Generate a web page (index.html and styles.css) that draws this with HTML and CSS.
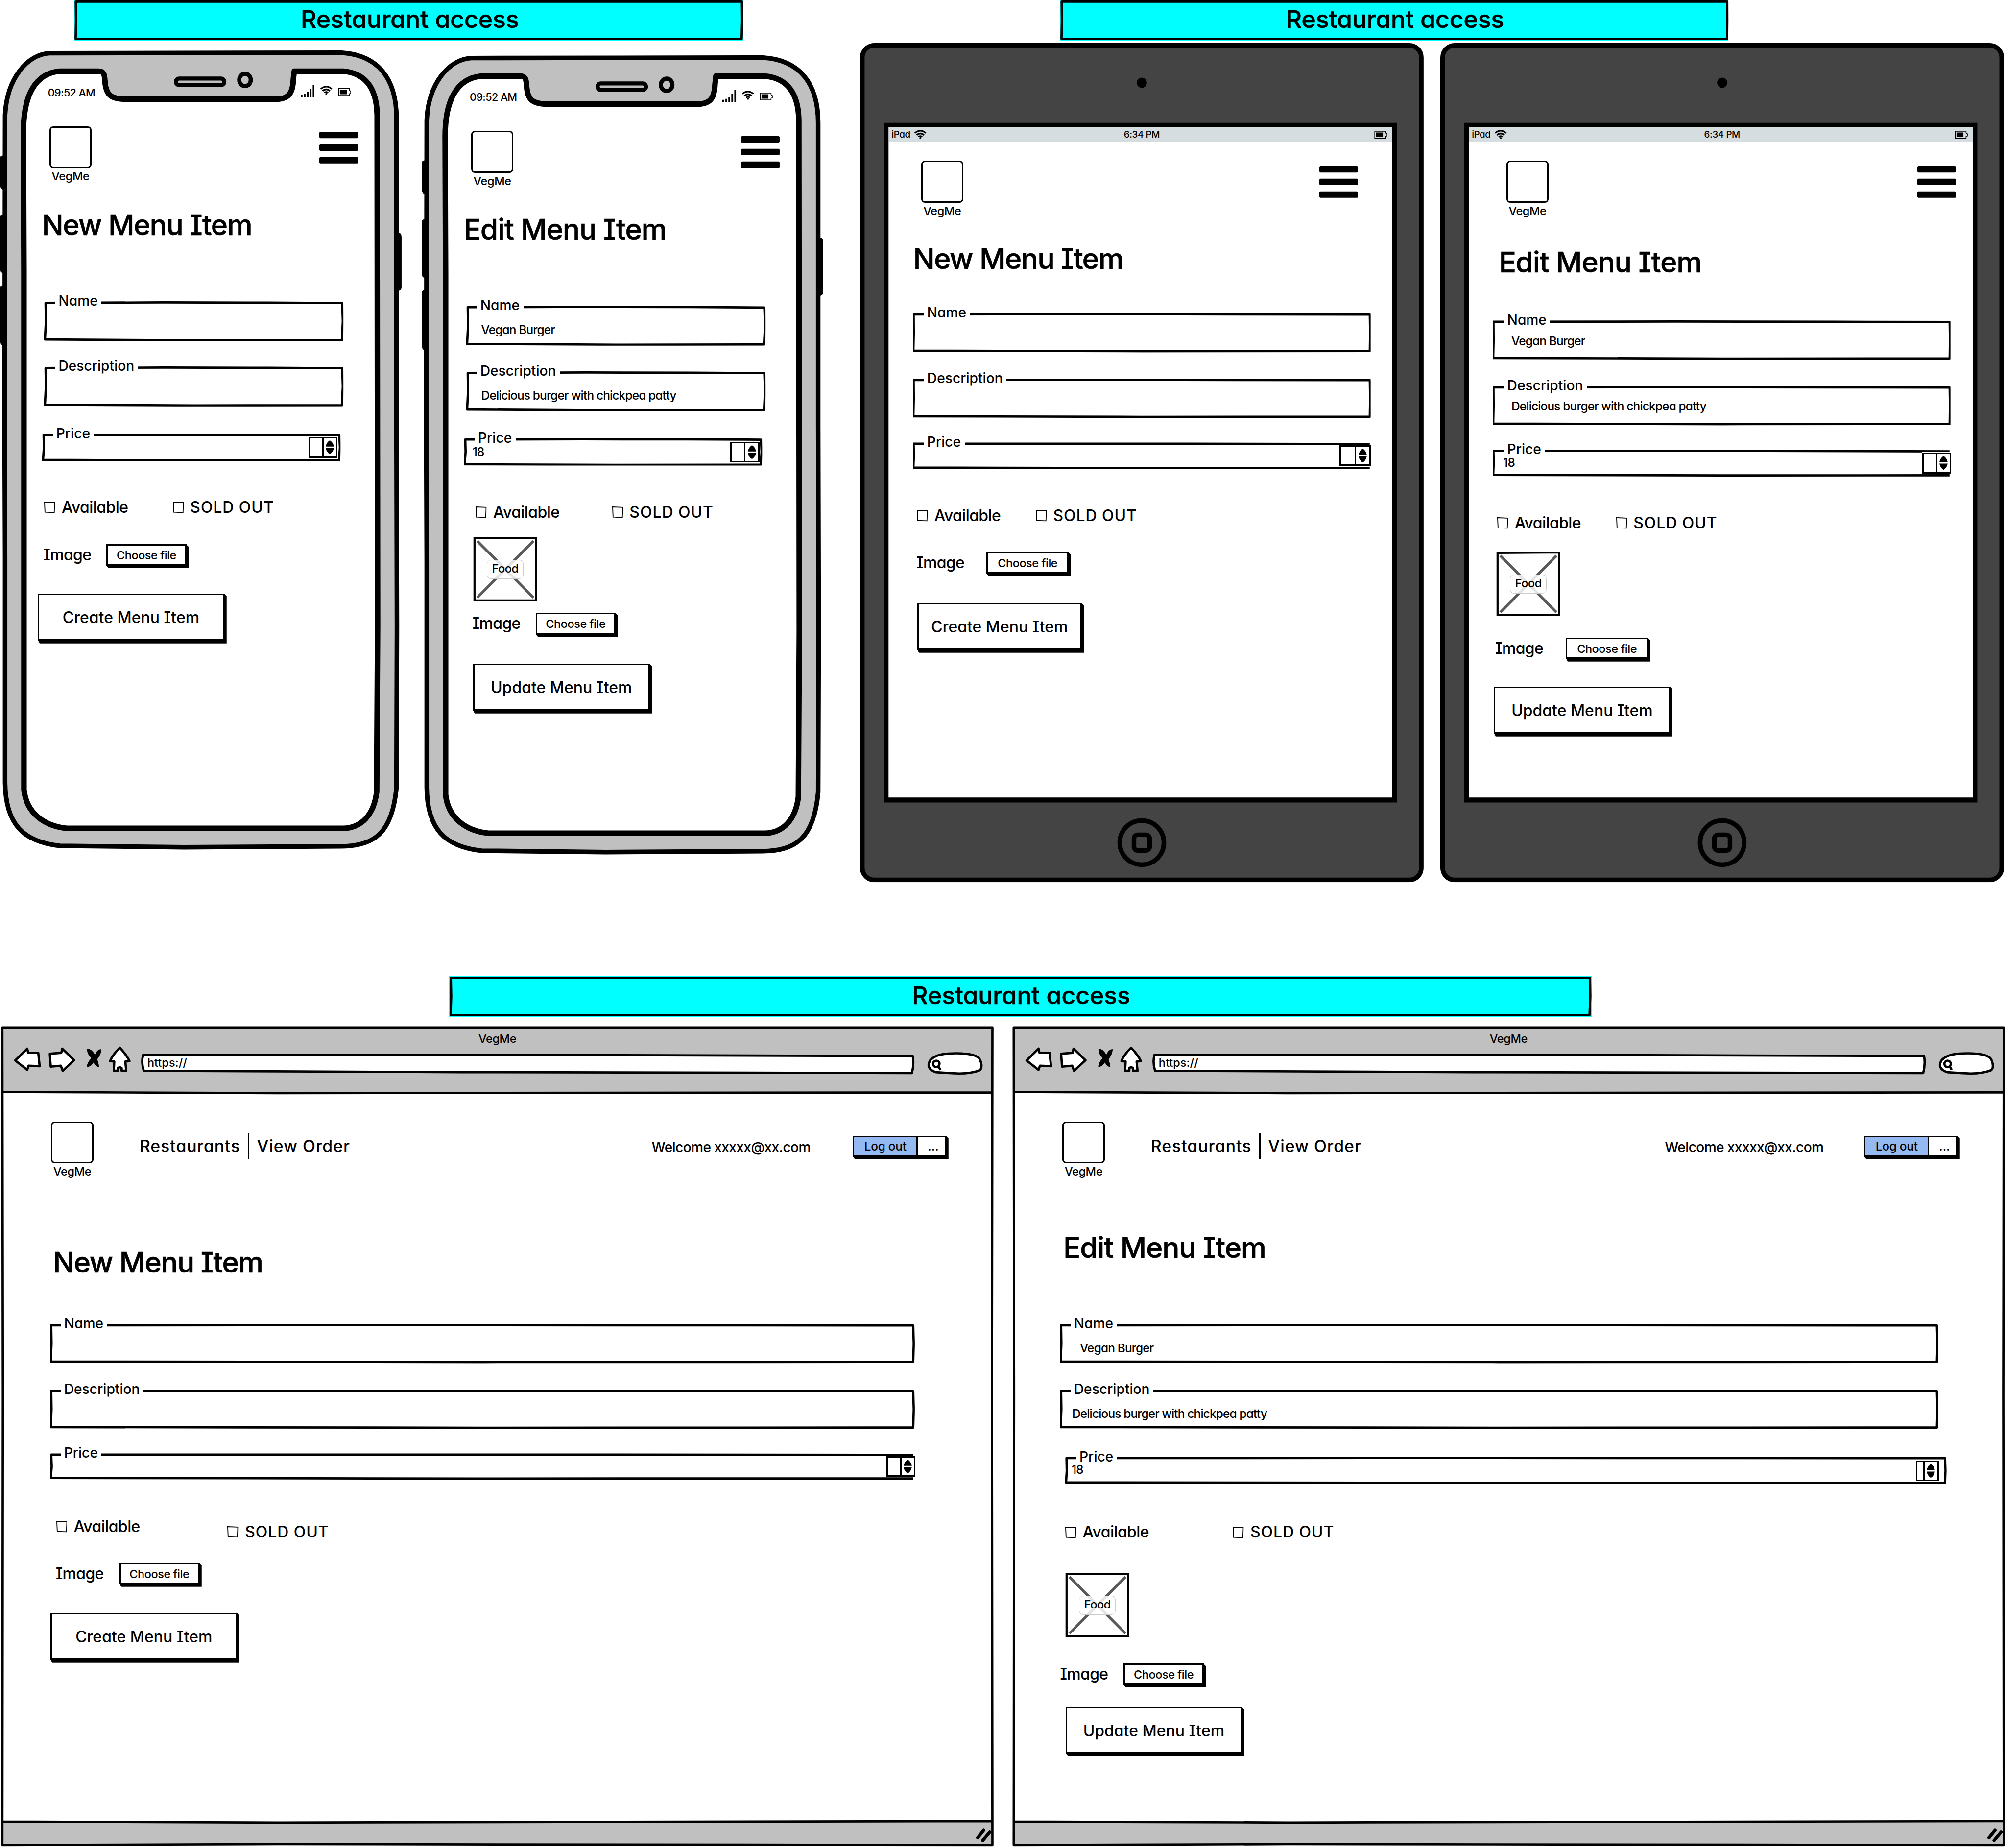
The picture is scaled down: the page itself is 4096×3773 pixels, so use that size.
FILE: index.html
```html
<!DOCTYPE html>
<html lang="en">
<head>
<meta charset="utf-8">
<title>VegMe wireframes – menu item forms</title>
<link rel="stylesheet" href="styles.css">
</head>
<body>
<svg class="defs" aria-hidden="true">
  <symbol id="box" viewBox="0 0 100 100" preserveAspectRatio="none">
    <path class="ink" d="M.5 4 L40 3 L75 3.600 L99.6 4.600 L99.8 50 L99.5 97 L50 97.600 L.3 95.500 L.6 50 Z"/>
  </symbol>
  <symbol id="box-wide" viewBox="0 0 100 100" preserveAspectRatio="none">
    <path class="ink" d="M.15 3.600 L40 3 L75 3.600 L99.82 4 L99.88 50 L99.82 96 L50 96.500 L.1 95 L.18 50 Z"/>
  </symbol>
  <symbol id="box-open" viewBox="0 0 100 100" preserveAspectRatio="none">
    <path class="ink" d="M99.8 6.500 L60 5 L.15 5 L.2 50 L.1 93 L50 95 L99.8 94.500"/>
  </symbol>
  <symbol id="banner" viewBox="0 0 100 100" preserveAspectRatio="none">
    <path class="ink" d="M.2 4 H99.82 L99.85 50 L99.78 96 H.18 L.23 50 Z"/>
  </symbol>
  <symbol id="phone" viewBox="0 0 874 1736">
    <path d="M1 232q0-4 6-4v74q-6-1-6-8zM1 360q0-4 6-4v127q-6 0-6-6zM1 514q0-4 6-4v131q-6-2-6-8zM858 396q14-3 14 8v112q-1 7-14 7z"/>
    <path class="shell" d="M108 6 C120 4 300 5 742 5 C820 10 862 60 861 150 L861 800 L862 1250 L861 1600 C852 1700 812 1728 740 1728 L400 1730 L130 1727 C50 1718 12 1680 11 1590 L11 1100 L10 800 L11 140 C15 60 60 8 108 6Z"/>
    <path class="glass" d="M129 45 H214 C226 45 227 52 228 68 C230 96 240 106 275 106 H600 C628 105 636 92 637 62 L639 45 H745 C795 49 818 84 819 140 L820 1250 L818 1610 C812 1660 785 1688 745 1689 H145 C95 1684 57 1655 52 1605 V480 L51 180 C50 95 78 50 129 45Z"/>
    <rect class="part" x="382" y="61" width="105" height="14" rx="7"/>
    <ellipse class="part" cx="532" cy="64" rx="12.500" ry="13.500"/>
  </symbol>
  <symbol id="tablet" viewBox="0 0 1224 1822">
    <rect class="slate" x="5" y="5" width="1214" height="1812" rx="26"/>
    <path d="M52 173H1166V1649H52z"/>
    <path class="white" d="M62 182H1156V1638H62z"/>
    <circle cx="612" cy="86" r="11"/>
    <circle class="ring" cx="612" cy="1736" r="48"/>
    <rect class="ring" x="595" y="1719" width="34" height="34" rx="8"/>
  </symbol>
  <symbol id="browser" viewBox="0 0 2156 1781">
    <path class="white" d="M3 3H2153V1778H3z"/>
    <path class="grey" d="M3 3H2153V144L600 145.500 3 143zM3 1727L600 1729 2153 1725V1778L600 1777 3 1778z"/>
    <path class="line" d="M3 3H2153L2152 800 2153 1778 600 1776 3 1778 4 800zM3 143L600 145.500 2153 144M3 1727L600 1729 2153 1726"/>
    <path class="tool" d="M31 74.500L57 49 59 58 81 58 84 87 60 86 57 95zM106 60L131 58 133 49 159 74 134 97 130 86 108 88zM258 47C265 54 276 68 279 76L270 77 272 97 262 97 262 91Q258 88 254 91L254 97 245 97 246 77 237 76C240 68 250 54 258 47z"/>
    <path d="M187 49Q197 49 204 62 209 50 218 50 218 61 209 72 213 84 213 89 205 88 201 79 194 89 187 89 185 83 196 69 186 60 187 49z"/>
    <path class="tool" d="M309 62H1000L1980 65Q1983 84 1978 102L1000 100 310 97Q304 78 309 62zM2018 74C2030 60 2055 59 2075 59 2100 59 2122 63 2126 73 2130 82 2131 92 2125 96 2110 102 2085 104 2060 102L2030 100C2012 94 2012 84 2018 74z"/>
    <path class="line" d="M2038 82a7 7 0 1 0-14 0a7 7 0 1 0 14 0M2036 88L2040 95"/>
    <path class="handle" d="M2121 1762L2134 1746M2132 1768L2147 1750"/>
  </symbol>
  <symbol id="wifi" viewBox="0 0 28 20">
    <path class="arc" d="M2 7Q14 -3 26 7M6 11.500Q14 4.500 22 11.500M10 15.500Q14 12 18 15.500"/><circle cx="14" cy="18" r="2"/>
  </symbol>
  <symbol id="battery" viewBox="0 0 30 18">
    <path class="cell" d="M1 1H26V5L29 7V12L26 13V17H1z"/><path d="M4 4H20V14H4z"/>
  </symbol>
  <symbol id="signal" viewBox="0 0 30 27">
    <path d="M0 22h4v5h-4zM6.500 20h4v7h-4zM13 16h4v11h-4zM19.500 9h4v18h-4zM26 0h4v27h-4z"/>
  </symbol>
  <symbol id="menu" viewBox="0 0 84 70">
    <rect width="84" height="14" rx="3"/><rect y="27.500" width="84" height="14" rx="3"/><rect y="55" width="84" height="14" rx="3"/>
  </symbol>
  <symbol id="check" viewBox="0 0 24 25">
    <path class="thin" d="M1 1L23 2 22 24 2 23z"/>
  </symbol>
  <symbol id="arrows" viewBox="0 0 18 30">
    <path d="M0 13.500Q2 4 9 0 16 4 18 13.500zM0 16.500H18Q16 26 9 30 2 26 0 16.500z"/>
  </symbol>
  <symbol id="cross" viewBox="0 0 140 141">
    <path class="stroke4" d="M3 3L137 2V138H3z"/><path class="x" d="M9 9L131 132M131 9L9 132"/>
  </symbol>
</svg>

<main class="canvas">
  <h2 class="banner banner-phone"><svg class="outline"><use href="#banner"/></svg><span>Restaurant access</span></h2>
  <h2 class="banner banner-tablet"><svg class="outline"><use href="#banner"/></svg><span>Restaurant access</span></h2>
  <h2 class="banner banner-browser"><svg class="outline"><use href="#banner"/></svg><span>Restaurant access</span></h2>

  <section class="device phone phone-new">
    <svg class="frame"><use href="#phone"/></svg>
    <div class="status"><span class="time">09:52 AM</span><svg class="i-signal"><use href="#signal"/></svg><svg class="i-wifi"><use href="#wifi"/></svg><svg class="i-battery"><use href="#battery"/></svg></div>
    <header class="top"><div class="logo"><i></i><span>VegMe</span></div><svg class="menu"><use href="#menu"/></svg></header>
    <h1>New Menu Item</h1>
    <div class="field name"><svg class="outline"><use href="#box"/></svg><b>Name</b></div>
    <div class="field desc"><svg class="outline"><use href="#box"/></svg><b>Description</b></div>
    <div class="field price"><svg class="outline"><use href="#box"/></svg><b>Price</b><div class="spin"><i></i><i><svg><use href="#arrows"/></svg></i></div></div>
    <div class="checks"><label><svg><use href="#check"/></svg>Available</label><label><svg><use href="#check"/></svg>SOLD OUT</label></div>
    <div class="image"><span>Image</span><button class="btn choose">Choose file</button></div>
    <button class="btn submit">Create Menu Item</button>
  </section>

  <section class="device phone phone-edit">
    <svg class="frame"><use href="#phone"/></svg>
    <div class="status"><span class="time">09:52 AM</span><svg class="i-signal"><use href="#signal"/></svg><svg class="i-wifi"><use href="#wifi"/></svg><svg class="i-battery"><use href="#battery"/></svg></div>
    <header class="top"><div class="logo"><i></i><span>VegMe</span></div><svg class="menu"><use href="#menu"/></svg></header>
    <h1 class="edit">Edit Menu Item</h1>
    <div class="field name"><svg class="outline"><use href="#box"/></svg><b>Name</b><span class="value">Vegan Burger</span></div>
    <div class="field desc"><svg class="outline"><use href="#box"/></svg><b>Description</b><span class="value">Delicious burger with chickpea patty</span></div>
    <div class="field price"><svg class="outline"><use href="#box"/></svg><b>Price</b><span class="value">18</span><div class="spin"><i></i><i><svg><use href="#arrows"/></svg></i></div></div>
    <div class="checks"><label><svg><use href="#check"/></svg>Available</label><label><svg><use href="#check"/></svg>SOLD OUT</label></div>
    <div class="photo"><svg class="outline"><use href="#cross"/></svg><span>Food</span></div>
    <div class="image"><span>Image</span><button class="btn choose">Choose file</button></div>
    <button class="btn submit">Update Menu Item</button>
  </section>

  <section class="device tablet tablet-new">
    <svg class="frame"><use href="#tablet"/></svg>
    <div class="status"><span class="left">iPad<svg class="i-wifi"><use href="#wifi"/></svg></span><span class="time">6:34 PM</span><svg class="i-battery"><use href="#battery"/></svg></div>
    <header class="top"><div class="logo"><i></i><span>VegMe</span></div><svg class="menu"><use href="#menu"/></svg></header>
    <h1>New Menu Item</h1>
    <div class="field name"><svg class="outline"><use href="#box-wide"/></svg><b>Name</b></div>
    <div class="field desc"><svg class="outline"><use href="#box-wide"/></svg><b>Description</b></div>
    <div class="field price"><svg class="outline"><use href="#box-open"/></svg><b>Price</b><div class="spin"><i></i><i><svg><use href="#arrows"/></svg></i></div></div>
    <div class="checks"><label><svg><use href="#check"/></svg>Available</label><label><svg><use href="#check"/></svg>SOLD OUT</label></div>
    <div class="image"><span>Image</span><button class="btn choose">Choose file</button></div>
    <button class="btn submit">Create Menu Item</button>
  </section>

  <section class="device tablet tablet-edit">
    <svg class="frame"><use href="#tablet"/></svg>
    <div class="status"><span class="left">iPad<svg class="i-wifi"><use href="#wifi"/></svg></span><span class="time">6:34 PM</span><svg class="i-battery"><use href="#battery"/></svg></div>
    <header class="top"><div class="logo"><i></i><span>VegMe</span></div><svg class="menu"><use href="#menu"/></svg></header>
    <h1 class="edit">Edit Menu Item</h1>
    <div class="field name"><svg class="outline"><use href="#box-wide"/></svg><b>Name</b><span class="value">Vegan Burger</span></div>
    <div class="field desc"><svg class="outline"><use href="#box-wide"/></svg><b>Description</b><span class="value">Delicious burger with chickpea patty</span></div>
    <div class="field price"><svg class="outline"><use href="#box-open"/></svg><b>Price</b><span class="value">18</span><div class="spin"><i></i><i><svg><use href="#arrows"/></svg></i></div></div>
    <div class="checks"><label><svg><use href="#check"/></svg>Available</label><label><svg><use href="#check"/></svg>SOLD OUT</label></div>
    <div class="photo"><svg class="outline"><use href="#cross"/></svg><span>Food</span></div>
    <div class="image"><span>Image</span><button class="btn choose">Choose file</button></div>
    <button class="btn submit">Update Menu Item</button>
  </section>

  <section class="device browser browser-new">
    <svg class="frame"><use href="#browser"/></svg>
    <div class="chrome"><div class="caption">VegMe</div><div class="url">https://</div></div>
    <header class="top">
      <div class="logo"><i></i><span>VegMe</span></div>
      <nav><a>Restaurants</a><a>View Order</a></nav>
      <div class="welcome">Welcome xxxxx@xx.com</div>
      <div class="btn session"><span>Log out</span><span>...</span></div>
    </header>
    <h1>New Menu Item</h1>
    <div class="field name"><svg class="outline"><use href="#box-wide"/></svg><b>Name</b></div>
    <div class="field desc"><svg class="outline"><use href="#box-wide"/></svg><b>Description</b></div>
    <div class="field price"><svg class="outline"><use href="#box-open"/></svg><b>Price</b><div class="spin"><i></i><i><svg><use href="#arrows"/></svg></i></div></div>
    <div class="checks"><label><svg><use href="#check"/></svg>Available</label><label><svg><use href="#check"/></svg>SOLD OUT</label></div>
    <div class="image"><span>Image</span><button class="btn choose">Choose file</button></div>
    <button class="btn submit">Create Menu Item</button>
  </section>

  <section class="device browser browser-edit">
    <svg class="frame"><use href="#browser"/></svg>
    <div class="chrome"><div class="caption">VegMe</div><div class="url">https://</div></div>
    <header class="top">
      <div class="logo"><i></i><span>VegMe</span></div>
      <nav><a>Restaurants</a><a>View Order</a></nav>
      <div class="welcome">Welcome xxxxx@xx.com</div>
      <div class="btn session"><span>Log out</span><span>...</span></div>
    </header>
    <h1 class="edit">Edit Menu Item</h1>
    <div class="field name"><svg class="outline"><use href="#box-wide"/></svg><b>Name</b><span class="value">Vegan Burger</span></div>
    <div class="field desc"><svg class="outline"><use href="#box-wide"/></svg><b>Description</b><span class="value">Delicious burger with chickpea patty</span></div>
    <div class="field price"><svg class="outline"><use href="#box-wide"/></svg><b>Price</b><span class="value">18</span><div class="spin"><i></i><i><svg><use href="#arrows"/></svg></i></div></div>
    <div class="checks"><label><svg><use href="#check"/></svg>Available</label><label><svg><use href="#check"/></svg>SOLD OUT</label></div>
    <div class="photo"><svg class="outline"><use href="#cross"/></svg><span>Food</span></div>
    <div class="image"><span>Image</span><button class="btn choose">Choose file</button></div>
    <button class="btn submit">Update Menu Item</button>
  </section>
</main>
</body>
</html>
```
FILE: styles.css
```css
* { box-sizing: border-box; }
html, body { margin: 0; overflow: hidden; background: #fff; }
body {
  font-family: Inter, "Open Sans", sans-serif;
  font-weight: 500;
  font-feature-settings: "cv11", "cv08";
  color: #000;
}
h1, h2, b, i { margin: 0; font-weight: 500; font-style: normal; }
svg { display: block; }
.defs { position: absolute; width: 0; height: 0; }

.canvas { position: relative; width: 4356px; height: 4012px; zoom: .9403; overflow: hidden; isolation: isolate; }

/* ink */
.ink { fill: none; stroke: #000; stroke-width: 5px; stroke-linejoin: round; vector-effect: non-scaling-stroke; }
.shell { fill: #c0c0c0; stroke: #000; stroke-width: 10px; }
.glass { fill: #fff; stroke: #000; stroke-width: 12px; stroke-linejoin: round; }
.part { fill: none; stroke: #000; stroke-width: 9px; }
.slate { fill: #444; stroke: #000; stroke-width: 10px; }
.ring { fill: none; stroke: #000; stroke-width: 10px; }
.white { fill: #fff; }
.grey { fill: #c0c0c0; }
.line { fill: none; stroke: #000; stroke-width: 5px; stroke-linejoin: round; }
.tool { fill: #fff; stroke: #000; stroke-width: 5px; stroke-linejoin: round; }
.handle { fill: none; stroke: #000; stroke-width: 7px; stroke-linecap: round; }
.arc { fill: none; stroke: #000; stroke-width: 3.4px; }
.cell { fill: none; stroke: #000; stroke-width: 1.8px; }
.thin { fill: none; stroke: #000; stroke-width: 2px; }
.stroke4 { fill: #fff; stroke: #000; stroke-width: 4.5px; }
.x { stroke: #5a5a5a; stroke-width: 6px; }

/* banners */
.banner {
  position: absolute; height: 88px; top: 0;
  display: flex; align-items: center; justify-content: center;
  background: #0ff; font-size: 53px; line-height: 1;
}
.banner span { position: relative; top: -2px; left: 2px; -webkit-text-stroke: .6px #000; }
.banner-phone { left: 162px; width: 1452px; }
.banner-tablet { left: 2302px; width: 1451px; }
.banner-browser { left: 974px; top: 2120px; width: 2483px; }
.outline { position: absolute; inset: 0; width: 100%; height: 100%; overflow: visible; }

/* devices */
.device { position: absolute; display: flex; flex-direction: column; align-items: flex-start; }
.device > * { flex: none; }
.frame { position: absolute; inset: 0; width: 100%; height: 100%; z-index: -1; overflow: visible; }
.phone { width: 874px; height: 1736px; padding-top: 76px; }
.phone-new { left: 0; top: 110px; }
.phone-edit { left: 916px; top: 120px; }
.tablet { width: 1224px; height: 1822px; padding-top: 182px; top: 94px; }
.tablet-new { left: 1868px; }
.tablet-edit { left: 3128px; }
.browser { width: 2156px; height: 1781px; top: 2228px; }
.browser-new { left: 2px; }
.browser-edit { left: 2198px; }

/* status bars */
.status { display: flex; align-items: center; white-space: nowrap; }
.phone .status { height: 30px; margin-left: 104px; width: 659px; font-size: 23px; letter-spacing: -.7px; }
.i-signal { width: 30px; height: 27px; margin: -6px 11px 0 auto; }
.i-wifi { width: 28px; height: 20px; margin-top: -9px; }
.i-battery { width: 29px; height: 17px; margin: -3px 0 0 12px; }
.tablet .status {
  display: grid; grid-template-columns: 1fr auto 1fr; margin-left: 62px; width: 1094px; height: 32px;
  padding: 0 11px 0 6px; background: #d6dde0; font-size: 20px; letter-spacing: -.4px;
}
.tablet .time { margin-left: 10px; }
.tablet .left { display: flex; align-items: center; gap: 8px; }
.tablet .status svg { margin: 0; }
.tablet .i-battery { justify-self: end; }

/* page header */
.top { display: flex; align-items: flex-start; }
.logo { width: 92px; font-size: 25px; line-height: 36px; text-align: center; letter-spacing: -.4px; }
.logo i { display: block; height: 91px; border: 4px solid #000; border-radius: 8px; }
.menu { width: 84px; height: 70px; margin-left: auto; margin-top: 12px; }
.phone .top { margin: 58px 0 0 107px; width: 670px; height: 128px; }
.tablet .top { margin: 41px 0 0 132px; width: 949px; height: 126px; }
.tablet-edit .top { margin-left: 143px; width: 977px; }

.chrome { width: 100%; height: 148px; padding-top: 10px; }
.caption { height: 36px; line-height: 36px; text-align: center; font-size: 25px; letter-spacing: -.4px; }
.url { margin: 19px 0 0 318px; font-size: 25px; line-height: 30px; }
.browser .top { margin: 59px 0 0 109px; height: 127px; }
nav { display: flex; margin: 26px 0 0 100px; font-size: 36px; line-height: 56px; white-space: nowrap; letter-spacing: 1px; }
nav a + a { border-left: 4px solid #000; margin-left: 17px; padding-left: 16px; }
.welcome { position: absolute; left: 1413px; top: 237px; font-size: 30px; line-height: 52px; letter-spacing: -.7px; white-space: nowrap; }
.browser-edit .welcome { left: 1417px; }
.session { position: absolute; left: 1850px; top: 238px; }

h1 { font-size: 62px; line-height: 72px; height: 70px; white-space: nowrap; letter-spacing: -1.5px; -webkit-text-stroke: .7px #000; }
h1.edit { letter-spacing: -1px; }

/* form controls */
.field { position: relative; }
.field b {
  position: absolute; left: 24px; top: -18px; height: 36px; padding: 0 8px 0 7px;
  background: #fff; font-size: 30px; line-height: 36px;
}
.value { position: absolute; font-size: 26px; line-height: 30px; white-space: nowrap; letter-spacing: -.9px; }
.spin { position: absolute; display: flex; height: 45px; top: 7px; border: 4px solid #000; background: #fff; outline: 2px solid #fff; }
.phone .spin { outline: 0; }
.spin i { flex: 1; display: flex; align-items: center; justify-content: center; }
.spin i + i { border-left: 4px solid #000; }
.spin svg { width: 18px; height: 30px; }
.checks { display: grid; height: 40px; font-size: 34px; line-height: 40px; white-space: nowrap; }
.checks label { display: flex; align-items: center; gap: 14px; letter-spacing: -.6px; }
.checks label + label { letter-spacing: 1px; }
.checks svg { width: 24px; height: 25px; }
.image { display: grid; height: 52px; font-size: 34px; line-height: 46px; letter-spacing: -.7px; }
.btn {
  display: flex; align-items: center; justify-content: center; padding: 1px 0 0; color: #000;
  font: inherit; font-feature-settings: inherit; background: #fff;
  border: 4px solid #000; border-right-width: 5px; border-bottom-width: 5px;
  box-shadow: 2px 3px #000, 4px 5px #000; white-space: nowrap; letter-spacing: 0;
}
.choose { width: 175px; height: 47px; font-size: 25px; letter-spacing: -.5px; }
.tablet .choose { width: 180px; }
.submit { height: 103px; font-size: 34px; }
.session { width: 204px; height: 46px; font-size: 26px; padding: 0; }
.session span { height: 100%; display: flex; align-items: center; justify-content: center; flex: 1; padding-left: 8px; }
.session span:first-child { flex: 0 0 138px; padding: 0; background: #94baf1; border-right: 4px solid #000; letter-spacing: -.3px; }
.photo { position: relative; width: 140px; height: 141px; display: flex; align-items: center; justify-content: center; font-size: 25px; letter-spacing: -.5px; }
.photo span {
  position: relative; width: 80px; height: 41px; line-height: 37px; text-align: center;
  border: 2px solid #ccc; border-radius: 9px; background: rgba(255, 255, 255, .84);
}

/* phones */
.phone h1 { margin: 51px 0 0 91px; }
.phone .field { width: 650px; margin-left: 96px; }
.phone .name { margin-top: 131px; height: 87px; }
.phone .desc { margin-top: 55px; height: 87px; }
.phone .price { margin: 59px 0 0 91px; width: 648px; height: 59px; }
.phone .value { left: 33px; top: 37px; }
.phone .price .value { left: 19px; top: 14px; }
.phone .spin { left: 579px; width: 63px; top: 7px; }
.phone-new .checks { margin: 81px 0 0 96px; grid-template-columns: 279px auto; }
.phone-new .image { margin: 60px 0 0 94px; grid-template-columns: 137px auto; }
.phone-new .submit { margin: 55px 0 0 82px; width: 406px; }
.phone-edit .checks { margin: 81px 0 0 117px; grid-template-columns: 296px auto; }
.phone-edit .photo { margin: 34px 0 0 111px; }
.phone-edit .image { margin: 24px 0 0 110px; grid-template-columns: 137px auto; }
.phone-edit .submit { margin: 58px 0 0 111px; width: 385px; }

/* tablets */
.tablet h1 { margin: 52px 0 0 115px; }
.tablet .field { width: 994px; height: 86px; margin-left: 114px; margin-top: 56px; }
.tablet .name { margin-top: 83px; }
.tablet .price { margin-top: 52px; height: 59px; }
.tablet .spin { left: 927px; width: 68px; }
.tablet-new .checks { margin: 81px 0 0 123px; grid-template-columns: 258px auto; }
.tablet-new .image { margin: 59px 0 0 122px; grid-template-columns: 152px auto; }
.tablet-new .submit { margin: 58px 0 0 124px; width: 358px; }
.tablet-edit h1 { margin: 59px 0 0 127px; }
.tablet-edit .name { margin-top: 92px; }
.tablet-edit .value { left: 40px; top: 29px; }
.tablet-edit .price .value { left: 22px; top: 13px; }
.tablet-edit .spin { left: 932px; width: 63px; }
.tablet-edit .checks { margin: 81px 0 0 123px; grid-template-columns: 258px auto; }
.tablet-edit .photo { margin: 42px 0 0 121px; }
.tablet-edit .image { margin: 46px 0 0 119px; grid-template-columns: 153px auto; }
.tablet-edit .submit { margin: 54px 0 0 116px; width: 384px; }

/* browsers */
.browser h1 { margin: 144px 0 0 113px; }
.browser .field { width: 1878px; height: 86px; margin-left: 106px; margin-top: 56px; }
.browser .name { margin-top: 99px; }
.browser .price { margin-top: 52px; height: 58px; }
.browser .spin { left: 1817px; width: 63px; }
.browser-new .checks { margin: 82px 0 0 120px; grid-template-columns: 372px auto; }
.browser-new .checks label + label { margin-top: 11px; margin-bottom: -11px; }
.browser-new .image { margin: 59px 0 0 119px; grid-template-columns: 138px auto; }
.browser-new .submit { margin: 56px 0 0 108px; width: 406px; }
.browser-edit h1 { margin: 112px 0 0 111px; }
.browser-edit .field { width: 1908px; margin-left: 103px; }
.browser-edit .name { margin-top: 131px; }
.browser-edit .price { width: 1914px; margin: 61px 0 0 115px; }
.browser-edit .value { left: 44px; top: 37px; }
.browser-edit .desc .value { left: 27px; }
.browser-edit .price .value { left: 14px; top: 12px; }
.browser-edit .spin { left: 1847px; width: 50px; }
.browser-edit .spin i:first-child { flex: 0 0 13px; }
.browser-edit .checks { margin: 85px 0 0 115px; grid-template-columns: 364px auto; }
.browser-edit .photo { margin: 68px 0 0 115px; }
.browser-edit .image { margin: 56px 0 0 104px; grid-template-columns: 138px auto; }
.browser-edit .submit { margin: 42px 0 0 116px; width: 384px; }
```
